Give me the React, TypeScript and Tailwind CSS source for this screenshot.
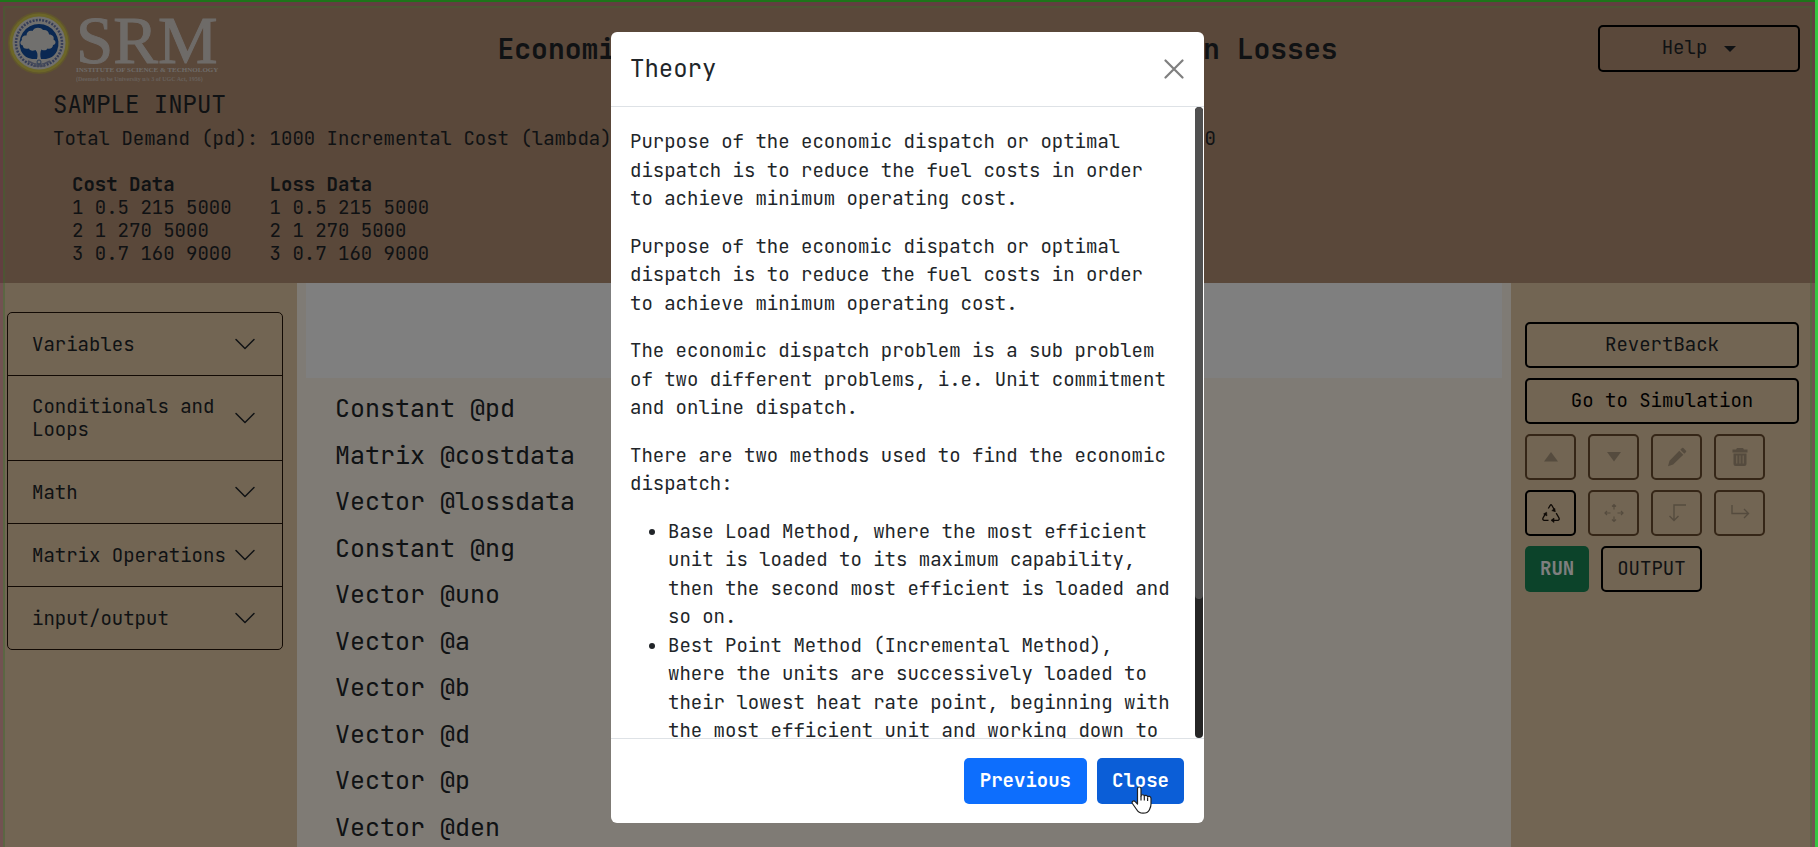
import type { ReactNode } from "react";
import { BsChevronDown } from "react-icons/bs";

const palette = ["Variables", "Conditionals and Loops", "Math", "Matrix Operations", "input/output"];

const statements = [
  "Constant @pd",
  "Matrix @costdata",
  "Vector @lossdata",
  "Constant @ng",
  "Vector @uno",
  "Vector @a",
  "Vector @b",
  "Vector @d",
  "Vector @p",
  "Vector @den",
];

const dataRows = ["1 0.5 215 5000", "2 1 270 5000", "3 0.7 160 9000"];

const paragraphs = [
  "Purpose of the economic dispatch or optimal dispatch is to reduce the fuel costs in order to achieve minimum operating cost.",
  "Purpose of the economic dispatch or optimal dispatch is to reduce the fuel costs in order to achieve minimum operating cost.",
  "The economic dispatch problem is a sub problem of two different problems, i.e. Unit commitment and online dispatch.",
  "There are two methods used to find the economic dispatch:",
];

const methods = [
  "Base Load Method, where the most efficient unit is loaded to its maximum capability, then the second most efficient is loaded and so on.",
  "Best Point Method (Incremental Method), where the units are successively loaded to their lowest heat rate point, beginning with the most efficient unit and working down to the least efficient unit.",
];

function Emblem() {
  return (
    <svg viewBox="0 0 64 64" className="h-16 w-16 shrink-0" aria-hidden="true">
      <circle cx="32" cy="32" r="31" fill="#c8bc48" opacity=".6" />
      <circle cx="32" cy="32" r="29.500" fill="#d8cc50" />
      <circle cx="32" cy="32" r="26.500" fill="#e2e0dc" />
      <circle cx="32" cy="32" r="23" fill="none" stroke="#6a7aae" strokeWidth="2.500" strokeDasharray="1.5 1" pathLength="110" />
      <path d="M14 40a19.500 19.500 0 1 1 36 0c-3 6-8 8-13 8h-10c-5 0-10-2-13-8z" fill="#1450a4" />
      <path
        d="M30 48c1-4 .500-7-1.500-9-3 1.500-6 .500-6.500-1.500-3.500 1-6.500-.500-6-3-3-.500-3.500-4-1-5.500-1-3 2-5 4.500-4.500 0-3.500 3-5.500 6-4.500 1.500-4 8-4.500 10.500-1 3.500-.500 6 1.500 6 4.500 3.500 0 5.500 2.500 4.500 5 3 1.500 2.500 5-.500 5.500 0 3-3 4.500-5.500 3.500-1 2-4 2.500-6 1-1.500 2.500-1.500 6-.500 9.500z"
        fill="#e2e0dc"
      />
      <path d="M21 50q11 7 22 0M26 55h12" stroke="#8a93b5" strokeWidth="1.500" fill="none" />
      <circle cx="32" cy="51" r="2" fill="none" stroke="#5d7fb0" />
    </svg>
  );
}

function HandPointer() {
  return (
    <svg viewBox="0 0 22 28" className="pointer-events-none absolute left-[34px] top-7 h-7 w-[22px]" aria-hidden="true">
      <path
        d="M6.500 2.800C6.500.400 10 .400 10 2.800V10c.500-1.800 3.300-1.600 3.300.300.600-1.500 3.200-1.200 3.300.700.800-1.200 3.400-.800 3.400 1.400V18c0 3-1 4.500-1.700 6-1.100 2.300-3.300 3.200-6.300 3.200-3.300 0-5-1.200-6.400-3.700L1.400 17.500C.300 15.500 2.700 14 4.200 15.600L6.500 18z"
        fill="#fff"
        stroke="#222"
        strokeWidth="1.200"
        strokeLinejoin="round"
      />
      <path d="M10 10v4.500M13.300 10.500v4M16.600 11.500v3.500" stroke="#222" strokeWidth="1.200" fill="none" />
    </svg>
  );
}

function ToolButton({ label, disabled = true, children }: { label: string; disabled?: boolean; children: ReactNode }) {
  return (
    <button
      type="button"
      aria-label={label}
      disabled={disabled}
      className="flex h-[46px] w-[51px] items-center justify-center rounded-[5px] border-2 border-black text-[#1c120a] disabled:border-[#6a4c2e] disabled:text-black/25"
    >
      {children}
    </button>
  );
}

function Tools() {
  return (
    <div className="flex flex-wrap gap-x-3 gap-y-[10px]">
      <ToolButton label="Move up">
        <svg viewBox="0 0 16 16" className="h-4 w-4" fill="currentColor"><path d="M8 3 15 12.500H1z" /></svg>
      </ToolButton>
      <ToolButton label="Move down">
        <svg viewBox="0 0 16 16" className="h-4 w-4" fill="currentColor"><path d="M8 12.500 1 3h14z" /></svg>
      </ToolButton>
      <ToolButton label="Edit">
        <svg viewBox="0 0 20 20" className="h-5 w-5" fill="currentColor">
          <path d="M12.300 3.700 16.300 7.700 6.200 17.600 1 19.200 2.500 13.800zM13.300 2.700 15 1.100Q15.700.500 16.400 1.100L19 3.700Q19.600 4.400 19 5.100L17.300 6.700z" />
        </svg>
      </ToolButton>
      <ToolButton label="Delete">
        <svg viewBox="0 0 18 20" className="h-5 w-[18px]" fill="currentColor">
          <path
            fillRule="evenodd"
            d="M6 1h6l1 1.500h3.500v3h-15v-3H5zM2.500 6.500h13V17q0 2-2 2h-9q-2 0-2-2zM5.300 8.500v8h1v-8zm3.200 0v8h1v-8zm3.200 0v8h1v-8z"
          />
        </svg>
      </ToolButton>
      <ToolButton label="Reset" disabled={false}>
        <svg viewBox="0 0 20 20" className="h-5 w-5" fill="none" stroke="currentColor" strokeWidth="1.300">
          <path d="M7.300 5.500 9.200 2.300Q10 1.200 10.800 2.300L13.500 7M15.200 10.200 18 15Q18.700 17 17 17.300H11M7.500 17.300H3Q1.300 17 2 15L4.500 10.700" />
          <path d="m14.300 8.800-3.500-1.200 3-2.200zM10 17.300l3-2.200v4.400zM5.600 9.200l.300 3.700-3.300-2z" fill="currentColor" strokeWidth=".6" />
        </svg>
      </ToolButton>
      <ToolButton label="Move">
        <svg viewBox="0 0 20 20" className="h-5 w-5" fill="none" stroke="currentColor" strokeWidth="1.200">
          <path d="M10 1.500v5M10 13.500v5M1 10h5.500M13.500 10H19M8 3.500l2-2 2 2M8 16.500l2 2 2-2M3 8l-2 2 2 2M17 8l2 2-2 2" />
        </svg>
      </ToolButton>
      <ToolButton label="Outdent">
        <svg viewBox="0 0 20 20" className="h-5 w-5" fill="none" stroke="currentColor" strokeWidth="1.400">
          <path d="M19 2H7v15.500M2.500 13 7 17.500l4.500-4.500" />
        </svg>
      </ToolButton>
      <ToolButton label="Indent">
        <svg viewBox="0 0 20 20" className="h-5 w-5" fill="none" stroke="currentColor" strokeWidth="1.400">
          <path d="M2 2v8.500h16M14 6l4.500 4.500L14 15" />
        </svg>
      </ToolButton>
    </div>
  );
}

function Header() {
  return (
    <header className="bg-[#b49074] pb-[18px]">
      <div className="grid h-[90px] grid-cols-[260px_1fr_240px] items-start">
        <div className="flex items-start pl-[7px] pt-[11px]">
          <Emblem />
          <div className="pl-[5px] font-['Liberation_Serif',serif] whitespace-nowrap text-[#ddd6d1]">
            <div className="h-[54px] text-[67px] leading-[58px] [-webkit-text-stroke:1px]">SRM</div>
            <div className="text-[7px] font-bold leading-[10px]">INSTITUTE OF SCIENCE &amp; TECHNOLOGY</div>
            <div className="text-[6px] font-bold leading-2 opacity-70">(Deemed to be University u/s 3 of UGC Act, 1956)</div>
          </div>
        </div>
        <h1 className="pt-8 text-center text-[28px] font-bold leading-[34px] whitespace-nowrap">
          Economic Load Dispatch Without Transmission Losses
        </h1>
        <div className="flex justify-end pr-[15px] pt-[25px]">
          <button type="button" className="flex h-[47px] w-[202px] items-center justify-center gap-[17px] rounded-[5px] border-2 border-black">
            Help
            <svg viewBox="0 0 12 6" className="h-[6px] w-3" fill="currentColor" aria-hidden="true"><path d="M0 0h12L6 6z" /></svg>
          </button>
        </div>
      </div>
      <section className="px-[53px]">
        <h2 className="text-[24px] leading-[29px]">SAMPLE INPUT</h2>
        <p className="mt-[6px] leading-7">
          Total Demand (pd): 1000 Incremental Cost (lambda): 300 Change in Incremental Cost (delta lambda): 0.10
        </p>
        <table className="mt-5 text-left leading-[23px]">
          <thead>
            <tr>
              <th className="px-[19px] py-0 font-bold">Cost Data</th>
              <th className="px-[19px] py-0 font-bold">Loss Data</th>
            </tr>
          </thead>
          <tbody>
            {dataRows.map((row) => (
              <tr key={row}>
                <td className="px-[19px] py-0">{row}</td>
                <td className="px-[19px] py-0">{row}</td>
              </tr>
            ))}
          </tbody>
        </table>
      </section>
    </header>
  );
}

function TheoryDialog() {
  return (
    <div className="absolute inset-0 flex justify-center bg-black/50 pb-6 pt-8">
      <section role="dialog" aria-label="Theory" className="flex h-full w-[593px] flex-col overflow-hidden rounded-[6px] bg-white text-[#212529]">
        <div className="flex h-[75px] shrink-0 items-center justify-between border-b border-[#dee2e6] pl-[19px] pr-5">
          <h2 className="text-[24px] leading-9">Theory</h2>
          <button type="button" aria-label="Close dialog" className="text-[#7f7f7f]">
            <svg viewBox="0 0 20 20" className="h-5 w-5" stroke="currentColor" strokeWidth="2.200" strokeLinecap="round"><path d="M1.500 1.500l17 17M18.500 1.500l-17 17" /></svg>
          </button>
        </div>
        <div className="flex min-h-0 flex-1">
          <div className="min-w-0 flex-1 overflow-hidden px-[19px] pt-[21px] leading-normal">
            {paragraphs.map((text, i) => (
              <p key={i} className="mb-[19px]">{text}</p>
            ))}
            <ul className="list-disc pl-[38px]">
              {methods.map((text) => (
                <li key={text}>{text}</li>
              ))}
            </ul>
          </div>
          <div className="mr-px w-2 shrink-0 overflow-hidden rounded bg-[#252525]">
            <div className="h-[78%] rounded bg-[#505050]" />
          </div>
        </div>
        <div className="flex h-[85px] shrink-0 items-center justify-end gap-[10px] border-t border-[#dee2e6] px-5 font-bold text-white">
          <button type="button" className="h-[46px] rounded-[5px] bg-[#0d6efd] px-4">Previous</button>
          <button type="button" className="relative h-[46px] rounded-[5px] bg-[#0b5ed7] px-[15px]">
            Close
            <HandPointer />
          </button>
        </div>
      </section>
    </div>
  );
}

export default function App() {
  return (
    <div className="relative flex h-screen flex-col overflow-hidden border-r-[3px] border-[#35c840] font-['JetBrains_Mono','DejaVu_Sans_Mono',monospace] text-[19px] text-[#212529]">
      <Header />
      <div className="flex min-h-0 flex-1">
        <nav className="w-[297px] shrink-0 bg-[#e4caa6] pl-[7px] pr-[14px] pt-[29px]">
          <div className="rounded-[5px] border border-[#241408]">
            {palette.map((name) => (
              <button
                key={name}
                type="button"
                className="flex w-full items-center justify-between border-b border-[#241408] py-[19px] pl-6 pr-[25px] text-left leading-[23px] last:border-b-0"
              >
                {name}
                <BsChevronDown className="h-6 w-6 shrink-0" />
              </button>
            ))}
          </div>
        </nav>
        <main className="min-w-0 flex-1 bg-[#fef6ea] px-[9px]">
          <div className="h-[95px] bg-white" />
          <ul className="flex flex-col gap-[9px] px-[29px] pt-3 text-[25px] leading-normal">
            {statements.map((s) => (
              <li key={s}>{s}</li>
            ))}
          </ul>
        </main>
        <aside className="flex w-[304px] shrink-0 flex-col gap-[10px] bg-[#e4caa6] pl-[14px] pr-4 pt-[39px]">
          <button type="button" className="h-[46px] rounded-[5px] border-2 border-black">RevertBack</button>
          <button type="button" className="h-[46px] rounded-[5px] border-2 border-black text-black">Go to Simulation</button>
          <Tools />
          <div className="flex gap-3">
            <button type="button" className="h-[46px] rounded-[5px] bg-[#198754] px-[15px] font-bold text-white">RUN</button>
            <button type="button" className="h-[46px] rounded-[5px] border-2 border-black px-[14px]">OUTPUT</button>
          </div>
        </aside>
      </div>
      <TheoryDialog />
      <div className="pointer-events-none absolute inset-0 border-t-2 border-[#1e741a]">
        <div className="h-full border-x-[3px] border-t-4 border-[#70304c]/35">
          <div className="h-full border-x-2 border-t-2 border-[#3a6a2c]/40" />
        </div>
      </div>
    </div>
  );
}
